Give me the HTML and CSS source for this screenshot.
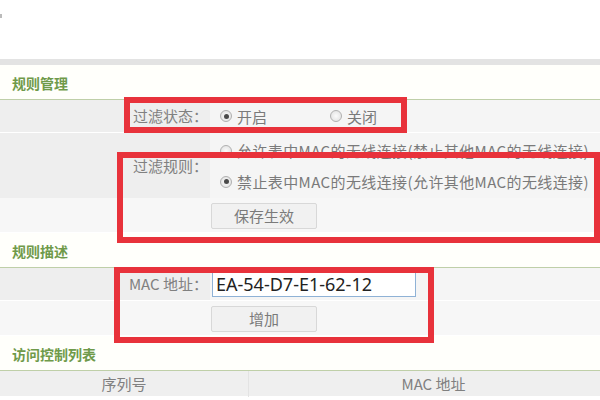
FILE: index.html
```html
<!DOCTYPE html>
<html lang="zh-CN">
<head>
  <meta charset="UTF-8" />
  <title>无线MAC地址过滤</title>
  <link rel="stylesheet" href="styles.css">
</head>
<body>
  <div class="page">
    <div class="top-space"><span class="crumb"></span></div>
    <div class="top-bar"></div>

    <div class="sec-title">规则管理</div>
    <div class="row row-status">
      <div class="label">过滤状态：</div>
      <div class="value">
        <label class="radio"><span class="dot on"></span>开启</label>
        <label class="radio radio-off"><span class="dot"></span>关闭</label>
      </div>
    </div>
    <div class="row row-rule">
      <div class="label">过滤规则：</div>
      <div class="value rule-list">
        <label class="radio"><span class="dot"></span>允许表中MAC的无线连接(禁止其他MAC的无线连接)</label>
        <label class="radio"><span class="dot on"></span>禁止表中MAC的无线连接(允许其他MAC的无线连接)</label>
      </div>
    </div>
    <div class="row row-btn">
      <div class="label"></div>
      <div class="value"><button class="btn">保存生效</button></div>
    </div>

    <div class="sec-title">规则描述</div>
    <div class="row row-mac">
      <div class="label">MAC 地址：</div>
      <div class="value"><input class="mac-input" type="text" value="EA-54-D7-E1-62-12" /></div>
    </div>
    <div class="row row-btn row-add">
      <div class="label"></div>
      <div class="value"><button class="btn">增加</button></div>
    </div>

    <div class="sec-title">访问控制列表</div>
    <div class="list-head">
      <div class="col">序列号</div>
      <div class="col">MAC 地址</div>
    </div>

    <div class="mark mark-1"></div>
    <div class="mark mark-2"></div>
    <div class="mark mark-3"></div>
  </div>
</body>
</html>
```

FILE: styles.css
```css
body {
  margin: 0;
  padding: 0;
  font-family: "Noto Sans CJK SC", "Noto Sans", sans-serif;
  font-size: 15px;
  color: #808080;
  background: #fff;
}

.page {
  position: relative;
  width: 600px;
  height: 400px;
  overflow: hidden;
}

.top-space {
  height: 45px;
  padding-top: 14px;
}

.crumb {
  display: block;
  width: 2px;
  height: 4px;
  background: #bbb;
}

.top-bar {
  height: 6px;
  background: #e3e3e3;
}

.sec-title {
  height: 34px;
  line-height: 36px;
  padding-left: 12px;
  font-size: 14px;
  font-weight: bold;
  color: #6f9a4a;
  background: #fffffb;
  border-bottom: 1px solid #bfcfa8;
}

.row {
  display: grid;
  grid-template-columns: 210px 1fr;
  border-bottom: 1px solid #fff;
}

.row .label {
  background: #eeeeee;
  text-align: right;
  padding-right: 2px;
  line-height: 32px;
}

.row .value {
  background: #f5f5f5;
  padding-left: 10px;
  display: flex;
  align-items: center;
}

.row-status {
  height: 32px;
}

.row-rule {
  height: 64px;
}

.row-rule .label {
  line-height: 66px;
}

.rule-list {
  flex-direction: column;
  align-items: flex-start !important;
  justify-content: center;
  line-height: 31px;
  letter-spacing: 0.4px;
}

.row-btn {
  height: 34px;
  border-bottom: none;
}

.row-btn .label,
.row-btn .value {
  background: #f7f7f7;
}

.row-btn + .sec-title {
  margin-top: 1px;
}

.row-mac {
  height: 32px;
}

.radio {
  display: inline-flex;
  align-items: center;
  gap: 5px;
  color: #7a7a7a;
}

.radio-off {
  margin-left: 63px;
}

.dot {
  width: 10px;
  height: 10px;
  border: 1px solid #b0b0b0;
  border-radius: 50%;
  background: radial-gradient(circle, #fbfbfb 0%, #dedede 100%);
  display: inline-flex;
  align-items: center;
  justify-content: center;
}

.dot.on::after {
  content: "";
  width: 5px;
  height: 5px;
  border-radius: 50%;
  background: #4a4a4a;
}

.btn {
  width: 106px;
  height: 26px;
  margin-left: -9px;
  margin-top: 1px;
  font-family: inherit;
  font-size: 15px;
  color: #7a7a7a;
  background: #f1f1f1;
  border: 1px solid #d8d8d8;
  border-radius: 2px;
}

.mac-input {
  width: 196px;
  height: 23px;
  margin-left: -8px;
  padding: 0 3px;
  font-family: "Noto Sans", sans-serif;
  font-size: 18px;
  color: #222;
  background: #fff;
  border: 1px solid #8fb2d6;
  border-radius: 0;
  outline: none;
}

.list-head {
  display: grid;
  grid-template-columns: 248px 1fr;
  height: 25px;
  background: #efefef;
  line-height: 26px;
}

.list-head .col {
  text-align: center;
}

.list-head .col + .col {
  border-left: 1px solid #e3e3e3;
  padding-left: 18px;
}

.mark {
  position: absolute;
  border: 6px solid #e8323b;
  box-sizing: border-box;
}

.mark-1 {
  left: 124px;
  top: 97px;
  width: 283px;
  height: 36px;
}

.mark-2 {
  left: 117px;
  top: 152px;
  width: 483px;
  height: 91px;
}

.mark-3 {
  left: 114px;
  top: 267px;
  width: 320px;
  height: 76px;
}
```
